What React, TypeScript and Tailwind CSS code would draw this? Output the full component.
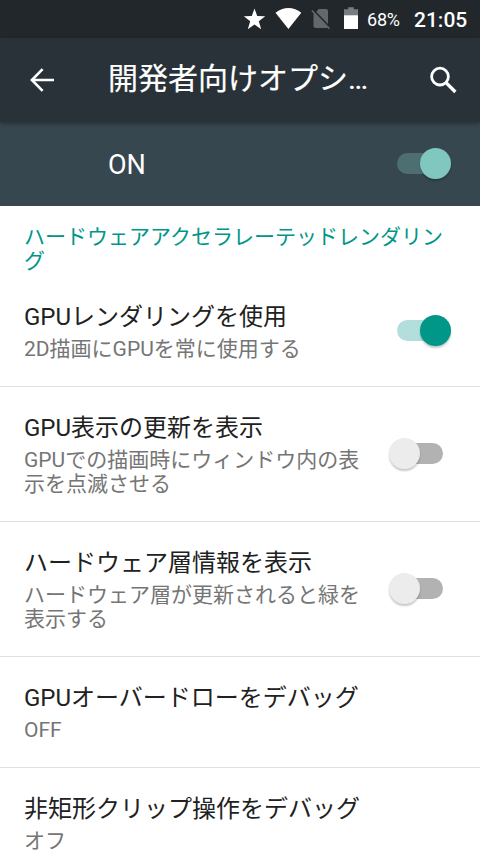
import clsx from 'clsx';

interface Setting {
  title: string;
  summary: string[];
  enabled?: boolean;
}

const settings: Setting[] = [
  { title: 'GPUレンダリングを使用', summary: ['2D描画にGPUを常に使用する'], enabled: true },
  { title: 'GPU表示の更新を表示', summary: ['GPUでの描画時にウィンドウ内の表', '示を点滅させる'], enabled: false },
  { title: 'ハードウェア層情報を表示', summary: ['ハードウェア層が更新されると緑を', '表示する'], enabled: false },
  { title: 'GPUオーバードローをデバッグ', summary: ['OFF'] },
  { title: '非矩形クリップ操作をデバッグ', summary: ['オフ'] },
];

interface ToggleProps {
  on: boolean;
  dark?: boolean;
}

function Toggle({ on, dark }: ToggleProps) {
  return (
    <div
      className={clsx(
        'relative w-[46px] h-[21px] mb-[2px] rounded-full shrink-0',
        dark ? 'bg-[#4e6f71]' : on ? 'bg-[#b2dfdb]' : 'bg-[#b2b2b2]'
      )}
    >
      <div
        className={clsx(
          'absolute -top-[5px] w-[31px] h-[31px] rounded-full shadow-[0_2px_2px_rgba(0,0,0,0.22)]',
          on ? 'left-[23px]' : '-left-[8px]',
          dark ? 'bg-[#80c7c0]' : on ? 'bg-[#009688]' : 'bg-[#ececec]'
        )}
      />
    </div>
  );
}

function StatusBar() {
  return (
    <div className="h-[38px] bg-[#21272b] flex items-center text-white pl-[243px] shrink-0">
      {/* Star */}
      <svg className="w-[23px] h-[38px]" viewBox="0 0 23 38" fill="#fff">
        <path d="M11.5 8.5l2.7 7.6 8 .2-6.4 4.9 2.4 8-6.7-4.7-6.7 4.7 2.4-8-6.4-4.9 8-.2z" />
      </svg>
      {/* Wifi */}
      <svg className="w-[27px] h-[38px] ml-[9px]" viewBox="0 0 27 38" fill="#fff">
        <path d="M0.5 12.7C8 6.4 19 6.4 26.3 12.7L13.4 29z" />
      </svg>
      {/* No SIM */}
      <svg className="w-[20px] h-[38px] ml-[9px]" viewBox="0 0 20 38">
        <path d="M7.5 9H15a2 2 0 0 1 2 2V24L5.4 12z" fill="#64686b" />
        <path d="M2.5 12.4L16.6 27l-1 1H4.5a2 2 0 0 1-2-2z" fill="#64686b" />
        <path d="M0.8 10.5L18.5 28.8" stroke="#64686b" strokeWidth="1.6" />
      </svg>
      {/* Battery */}
      <svg className="w-[14px] h-[38px] ml-[13px]" viewBox="0 0 14 38">
        <path d="M4.2 7.3h5.6v2H14V16H0V9.3h4.2z" fill="#7a7d80" />
        <path d="M0 15.3h14V29H0z" fill="#fff" />
      </svg>
      <span className="ml-[9px] w-[34px] text-[18px] leading-[38px] tracking-[-0.2px] pt-px">68%</span>
      <span className="ml-[13px] pt-px text-[21px] leading-[38px] font-medium">21:05</span>
    </div>
  );
}

function SettingRow({ setting }: { setting: Setting }) {
  return (
    <div className="flex items-center pl-6 pr-[37px] border-b border-[#e0e0e0] shrink-0">
      <div className="flex-1 pt-[25px] pb-[25px] whitespace-nowrap">
        <div className="text-[24px] leading-[32px] text-[#212121]">{setting.title}</div>
        <div className="mt-1 text-[21px] leading-[24px] text-[#757575]">
          {setting.summary.map((line) => (
            <div key={line}>{line}</div>
          ))}
        </div>
      </div>
      {setting.enabled !== undefined && <Toggle on={setting.enabled} />}
    </div>
  );
}

export default function App() {
  return (
    <div className="w-[480px] h-[854px] overflow-hidden flex flex-col bg-white font-[Roboto,'Noto_Sans_CJK_JP',sans-serif]">
      <StatusBar />

      {/* App bar */}
      <div className="relative h-[84px] bg-[#283238] flex items-center text-white shadow-[0_2px_4px_rgba(0,0,0,0.3)] shrink-0">
        <svg className="w-6 h-6 ml-[30px] shrink-0" viewBox="0 0 24 24" fill="none" stroke="#fff" strokeWidth="2.6">
          <path d="M24 12H2.5M12.6 1.2L1.9 12l10.7 10.8" />
        </svg>
        <h1 className="ml-[54px] mb-[3px] w-[268px] text-[30px] leading-[40px] font-normal whitespace-nowrap [-webkit-text-stroke:0.2px]">
          開発者向けオプシ…
        </h1>
        <svg className="w-[28px] h-[28px] ml-[53px] mb-px shrink-0" viewBox="0 0 28 28" fill="none" stroke="#fff">
          <circle cx="11" cy="10.6" r="8.4" strokeWidth="2.8" />
          <path d="M17 16.6l9.4 9.4" strokeWidth="3.4" />
        </svg>
      </div>

      {/* Master switch */}
      <div className="h-[84px] bg-[#37474f] flex items-center justify-between pl-[108px] pr-[37px] text-white shrink-0">
        <span className="pt-[2px] text-[27px] leading-[36px]">ON</span>
        <Toggle on dark />
      </div>

      {/* Category */}
      <div className="h-[70px] pt-[19px] pl-6 text-[21px] leading-[24px] text-[#009688] whitespace-nowrap shrink-0">
        <div>ハードウェアアクセラレーテッドレンダリン</div>
        <div>グ</div>
      </div>

      {settings.map((setting) => (
        <SettingRow key={setting.title} setting={setting} />
      ))}
    </div>
  );
}
